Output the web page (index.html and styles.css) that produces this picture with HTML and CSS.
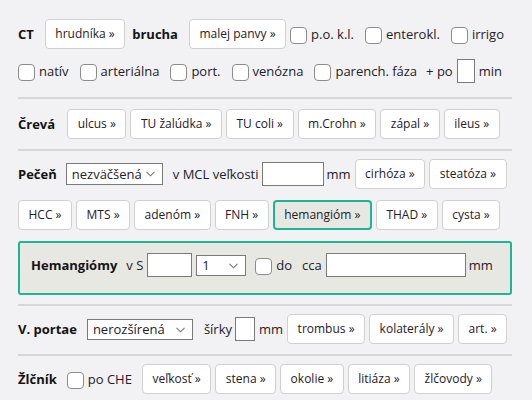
FILE: index.html
```html
<!DOCTYPE html>
<html lang="sk">
<head>
<meta charset="utf-8">
<title>CT</title>
<link rel="stylesheet" href="styles.css">
</head>
<body>
<div class="page">
  <section class="sec s1">
    <div class="row">
      <span class="title mr11">CT</span>
      <button class="btn">hrudníka »</button>
      <span class="title ml3 mr11">brucha</span>
      <button class="btn">malej panvy »</button>
      <label class="chk"><input type="checkbox"><span>p.o. k.l.</span></label>
      <label class="chk"><input type="checkbox"><span>enterokl.</span></label>
      <label class="chk"><input type="checkbox"><span>irrigo</span></label>
    </div>
    <div class="row row2">
      <label class="chk"><input type="checkbox"><span>natív</span></label>
      <label class="chk"><input type="checkbox"><span>arteriálna</span></label>
      <label class="chk"><input type="checkbox"><span>port.</span></label>
      <label class="chk"><input type="checkbox"><span>venózna</span></label>
      <label class="chk mr9"><input type="checkbox"><span>parench. fáza</span></label>
      <span class="mr4">+ po</span>
      <input class="txt w18 mr4" type="text">
      <span>min</span>
    </div>
  </section>

  <section class="sec s2">
    <div class="row">
      <span class="title mr12">Črevá</span>
      <button class="btn">ulcus »</button>
      <button class="btn">TU žalúdka »</button>
      <button class="btn">TU coli »</button>
      <button class="btn">m.Crohn »</button>
      <button class="btn">zápal »</button>
      <button class="btn">ileus »</button>
    </div>
  </section>

  <section class="sec s3">
    <div class="row">
      <span class="title mr9">Pečeň</span>
      <span class="sel mr10">
        <select class="w97"><option>nezväčšená</option></select>
        <svg class="chev" width="9" height="6" viewBox="0 0 9 6"><path d="M0.5 0.8 L4.5 4.8 L8.5 0.8" fill="none" stroke="#777" stroke-width="1.1"/></svg>
      </span>
      <span class="mr3">v MCL veľkosti</span>
      <input class="txt w62 mr3" type="text">
      <span class="mr4">mm</span>
      <button class="btn">cirhóza »</button>
      <button class="btn">steatóza »</button>
    </div>
    <div class="row">
      <button class="btn">HCC »</button>
      <button class="btn">MTS »</button>
      <button class="btn">adenóm »</button>
      <button class="btn">FNH »</button>
      <button class="btn on">hemangióm »</button>
      <button class="btn">THAD »</button>
      <button class="btn">cysta »</button>
    </div>
    <div class="hem">
      <div class="row">
        <span class="title mr9">Hemangiómy</span>
        <span class="mr4">v S</span>
        <input class="txt w45 mr4" type="text">
        <span class="sel mr9">
          <select class="w50 h21"><option>1</option></select>
          <svg class="chev" width="9" height="6" viewBox="0 0 9 6"><path d="M0.5 0.8 L4.5 4.8 L8.5 0.8" fill="none" stroke="#777" stroke-width="1.1"/></svg>
        </span>
        <label class="chk mr10"><input type="checkbox"><span>do</span></label>
        <span class="mr4">cca</span>
        <input class="txt w140 mr3" type="text">
        <span>mm</span>
      </div>
    </div>
  </section>

  <section class="sec s4">
    <div class="row">
      <span class="title mr10">V. portae</span>
      <span class="sel mr11">
        <select class="w106 h21"><option>nerozšírená</option></select>
        <svg class="chev" width="9" height="6" viewBox="0 0 9 6"><path d="M0.5 0.8 L4.5 4.8 L8.5 0.8" fill="none" stroke="#777" stroke-width="1.1"/></svg>
      </span>
      <span class="mr3">šírky</span>
      <input class="txt w20 mr4" type="text">
      <span class="mr4">mm</span>
      <button class="btn">trombus »</button>
      <button class="btn">kolaterály »</button>
      <button class="btn">art. »</button>
    </div>
  </section>

  <section class="sec s5">
    <div class="row">
      <span class="title mr10">Žlčník</span>
      <label class="chk mr10"><input type="checkbox"><span>po CHE</span></label>
      <button class="btn">veľkosť »</button>
      <button class="btn">stena »</button>
      <button class="btn">okolie »</button>
      <button class="btn">litiáza »</button>
      <button class="btn">žlčovody »</button>
    </div>
  </section>
</div>
</body>
</html>
```

FILE: styles.css
```css
* { box-sizing: border-box; }

body {
  margin: 0;
  background: #f2f2f4;
  font-family: "Open Sans", "DejaVu Sans", sans-serif;
  font-size: 13px;
  color: #1f2028;
}

.page {
  width: 532px;
  padding: 19px 20px 0 18px;
}

.sec {
  border-bottom: 2px solid #d6d6d8;
}

.sec:last-child {
  border-bottom: none;
}

.s1 { padding: 0 0 12px; }
.s2 { padding: 10px 0 10px; }
.s3 { padding: 8px 0 9px; }
.s4 { padding: 8px 0 10px; }
.s5 { padding: 8px 0 0; }

.s1 .row2 { margin-top: 8px; height: 28px; }
.s3 > .row + .row,
.s3 > .row + .hem { margin-top: 11px; }

.row {
  display: flex;
  align-items: center;
  height: 30px;
  white-space: nowrap;
  line-height: 18px;
}

.title {
  font-weight: 700;
  color: #141414;
}

.btn {
  height: 30px;
  padding: 0 9.5px;
  margin: 0 4px 0 0;
  background: #fff;
  border: 1px solid #d0d0d0;
  border-radius: 4px;
  font-family: "Open Sans", "DejaVu Sans", sans-serif;
  font-size: 12px;
  color: #1f2028;
  line-height: 16px;
}

.btn.on {
  background: #e8e8e3;
  border: 2px solid #1db596;
  padding: 0 9.5px;
}

.chk {
  display: flex;
  align-items: center;
  margin-right: 11px;
}

.chk input {
  appearance: none;
  -webkit-appearance: none;
  width: 17px;
  height: 17px;
  margin: 2px 4px 0 0;
  border: 1px solid #8c8c8c;
  border-radius: 4px;
  background: #fff;
}

.txt {
  height: 24px;
  margin: 0;
  padding: 0 3px;
  border: 1px solid #7a7a7a;
  background: #fff;
  font: 13px "Open Sans", sans-serif;
}

.sel {
  position: relative;
  display: inline-flex;
}

.sel select {
  appearance: none;
  -webkit-appearance: none;
  height: 22px;
  margin: 0;
  padding: 0 0 0 5px;
  border: 1px solid #7a7a7a;
  border-radius: 0;
  background: #fff;
  font-family: "Open Sans", "DejaVu Sans", sans-serif;
  font-size: 13px;
  color: #1f2028;
}

.sel select.h21 { height: 21px; }

.chev {
  position: absolute;
  right: 8px;
  top: 8px;
  pointer-events: none;
}

.hem {
  background: #e8e8e3;
  border: 2px solid #1db596;
  border-radius: 3px;
  height: 54px;
  padding: 9px 11px 0;
}

.hem .row { height: 26px; }

.w18 { width: 18px; }
.w20 { width: 20px; }
.w45 { width: 45px; }
.w62 { width: 62px; }
.w140 { width: 140px; }
.w50 { width: 50px; }
.w97 { width: 97px; }
.w106 { width: 106px; }

.mr3 { margin-right: 3px; }
.mr4 { margin-right: 4px; }
.mr9 { margin-right: 9px; }
.mr10 { margin-right: 10px; }
.mr11 { margin-right: 11px; }
.mr12 { margin-right: 12px; }
.ml3 { margin-left: 3px; }
```
